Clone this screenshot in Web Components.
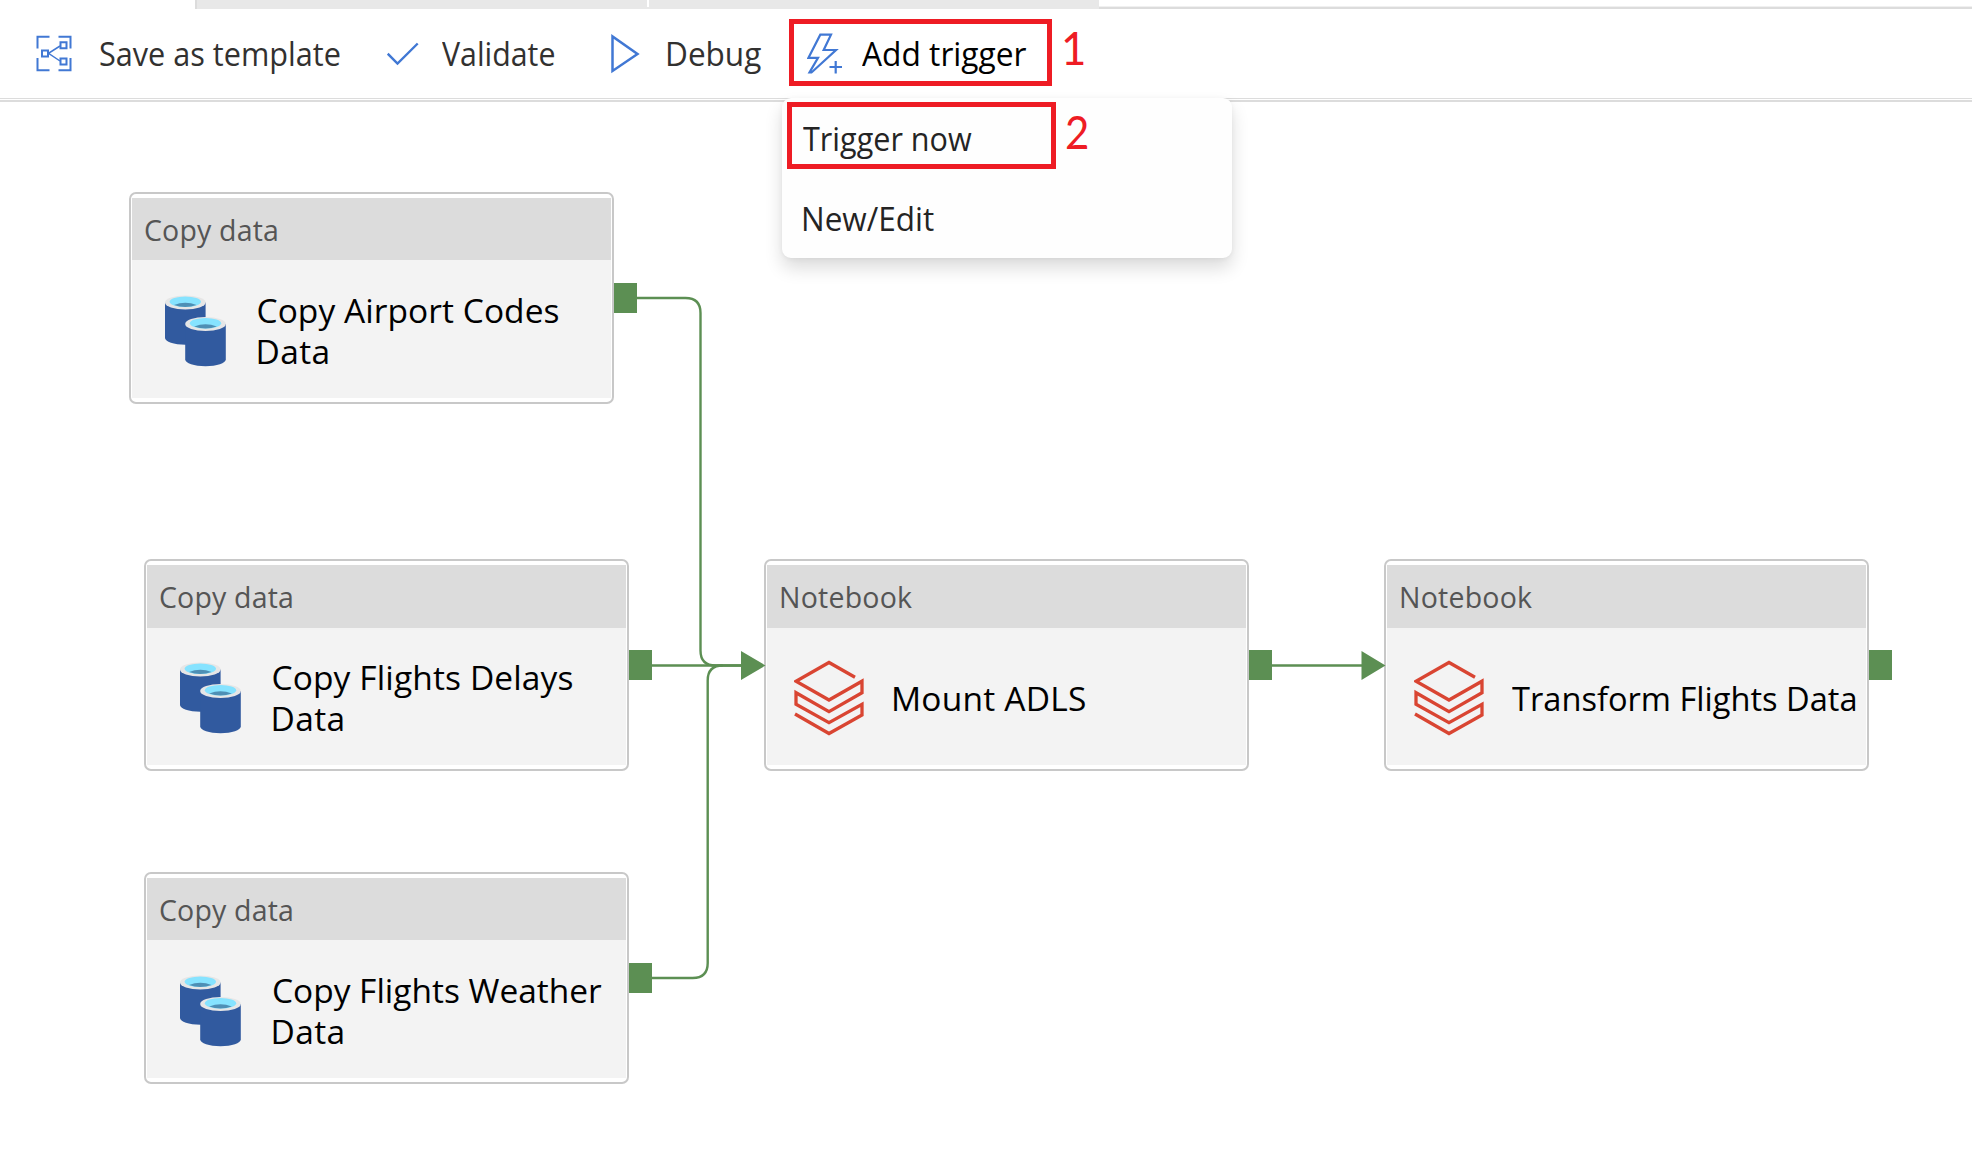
<!DOCTYPE html>
<html lang="en">
<head>
<meta charset="utf-8">
<title>Pipeline</title>
<style>
html,body{margin:0;height:100%;overflow:hidden;background:#fff}
body{font-family:"Open Sans","Noto Sans",sans-serif}
</style>
</head>
<body>
<pipeline-editor></pipeline-editor>
<script>
const define=(name,html,after)=>{
  const t=document.createElement('template');
  t.innerHTML=html;
  customElements.define(name,class extends HTMLElement{
    constructor(){super();this.attachShadow({mode:'open'}).append(t.content.cloneNode(true));}
    connectedCallback(){if(after)after.call(this,this.shadowRoot);}
  });
};

/* Text whose ink spans exactly "w" pixels: wide text is condensed, narrow text is tracked out. */
const pen=document.createElement('canvas').getContext('2d');
define('fit-text',`<style>:host{display:block;white-space:nowrap;flex:none}span{display:inline-block;transform-origin:0 50%}</style><span></span>`,function(r){
  const s=r.querySelector('span'),text=this.getAttribute('text'),w=+this.getAttribute('w');
  s.textContent=text;
  const cs=getComputedStyle(this);
  pen.font=cs.fontWeight+' '+cs.fontSize+' '+cs.fontFamily;
  const m=pen.measureText(text);
  const ink=m.actualBoundingBoxLeft+m.actualBoundingBoxRight;
  let k=1;
  if(ink>w){k=w/ink;s.style.transform='scaleX('+k.toFixed(4)+')';}
  else if(text.length>1)s.style.letterSpacing=((w-ink)/(text.length-1)).toFixed(3)+'px';
  s.style.marginLeft=(m.actualBoundingBoxLeft*k).toFixed(2)+'px';
  this.style.width=w+'px';
});

const icons={
  template:'<svg width="36" height="38" viewBox="36.5 34.5 36 38"><g fill="none" stroke="#4178d4" stroke-width="2"><path d="M50 36.3H38V48M59 36.3H71V48M38 57.500V69.700H50M71 57.500V69.700H59"/><path d="M42.500 50h6v6h-6zM61 41.800h6v6h-6zM61 58h6v6h-6z"/><path stroke-width="1.500" d="M60.500 45.500L49 52.800L60.500 60.500"/></g></svg>',
  check:'<svg width="32" height="24" viewBox="387 40 32 24"><path d="M387.700 51.700L397.500 61.500L417.700 41.500" fill="none" stroke="#4178d4" stroke-width="2.400"/></svg>',
  play:'<svg width="29" height="40" viewBox="611 33 29 40"><path d="M612.500 35.500V70L637.500 53Z" fill="none" stroke="#4178d4" stroke-width="2.500"/></svg>',
  bolt:'<svg width="36" height="42" viewBox="807 32.500 36 42"><g fill="none" stroke="#4178d4" stroke-width="2.200"><path d="M820.300 34.200H831L823.700 49.500H836L811.500 72H809.500L818 57.300H808.500Z"/><path d="M829.500 66.500H842M835.700 60.500V73"/></g></svg>',
  storage:'<svg width="62" height="72" viewBox="165 294.500 62 72"><g id="a"><path fill="#315a9f" d="M165 302V337.500C165 341.200 174 344.200 185.300 344.200S205.600 341.200 205.600 337.500V302Z"/><ellipse cx="185.300" cy="302" rx="20.300" ry="6.900" fill="#e6e6e6"/><ellipse cx="185.300" cy="301.200" rx="15.700" ry="5.300" fill="#86e3ff"/><path fill="#4e8fb5" d="M174 304.400Q185.300 300 196.600 304.400Q185.300 308.400 174 304.400Z"/></g><use href="#a" x="20.200" y="21.500"/></svg>',
  bricks:'<svg width="70" height="76" viewBox="794 660 70 76"><path fill="none" stroke="#d94532" stroke-width="3.300" d="M855 677.300L829 662.500L796 681.200L829 700L862 681.200V692.700L829 711.600L796 692.700V704.200L829 722.600L862 704.200V715L829 733.500L795 714"/></svg>'
};
define('app-icon','<style>:host{display:block;flex:none}svg{display:block}</style><div></div>',function(r){
  r.querySelector('div').innerHTML=icons[this.getAttribute('name')];
});

define('tab-strip',`<style>
:host{display:flex;height:9px}
.on{width:195px}
.tab{box-sizing:border-box;background:#e8e8e8}
.a{width:452px;border-left:2px solid #dcdcdc}
.sep{width:2px;background:#e8e8e8;display:flex}
.sep i{width:2px;height:7px;background:#fff}
.b{width:450px}
.rest{flex:1;box-sizing:border-box;border-bottom:2px solid #dcdcdc;box-shadow:inset 0 -1px #f0f0f0}
</style><div class="on"></div><div class="tab a"></div><div class="sep"><i></i></div><div class="tab b"></div><div class="rest"></div>`);

define('tool-button',`<style>
:host{display:flex;align-items:center;color:#323130;font-size:32px;line-height:44px}
</style><slot></slot>`);

define('tool-bar',`<style>
:host{display:flex;align-items:center;box-sizing:border-box;height:93px;padding:0 0 4px 36px;
 background:linear-gradient(#dcdcdc,#dcdcdc) 0 89px/100% 1px no-repeat,linear-gradient(#dcdcdc,#dcdcdc) 0 91px/100% 2px no-repeat}
tool-button fit-text{margin-top:1px}
tool-button.save{gap:28px;margin-right:46.500px}
tool-button.val{gap:23.500px;margin-right:56px}
tool-button.dbg{gap:28px;margin-right:28px}
tool-button.add{box-sizing:border-box;gap:19.500px;color:#000;width:263px;height:67px;border:5px solid #ee1c24;padding-left:13px;margin-top:-2px}
tool-button.add app-icon{margin-top:2px}
tool-button.add fit-text{margin-top:3px}
.n{font:400 46px Lato,sans-serif;color:#ee1c24;margin:-12px 0 0 12px}
</style>
<tool-button class="save"><app-icon name="template"></app-icon><fit-text text="Save as template" w="240"></fit-text></tool-button>
<tool-button class="val"><app-icon name="check"></app-icon><fit-text text="Validate" w="112.5"></fit-text></tool-button>
<tool-button class="dbg"><app-icon name="play"></app-icon><fit-text text="Debug" w="93"></fit-text></tool-button>
<tool-button class="add"><app-icon name="bolt"></app-icon><fit-text text="Add trigger" w="164.5"></fit-text></tool-button>
<fit-text class="n" text="1" w="20"></fit-text>`);

define('trigger-menu',`<style>
:host{position:absolute;left:782px;top:98px;width:450px;height:160px;display:flex;flex-direction:column;background:#fefefe;border-radius:9px;box-shadow:0 10px 18px rgba(0,0,0,.14),0 1px 5px rgba(0,0,0,.05);color:#242424;font-size:33px;line-height:44px}
.row{height:80px;display:flex;align-items:center}
.row.two{padding:2px 0 0 22px;box-sizing:border-box}
.hit{box-sizing:border-box;width:269px;height:67px;border:5px solid #ee1c24;margin:-5px 0 0 5px;padding-left:10.500px;display:flex;align-items:center}
.hit fit-text{margin-top:7px}
.n{font:400 46px Lato,sans-serif;color:#ee1c24;margin:-13px 0 0 11px}
</style>
<div class="row"><div class="hit"><fit-text text="Trigger now" w="169"></fit-text></div><fit-text class="n" text="2" w="21"></fit-text></div>
<div class="row two"><fit-text text="New/Edit" w="129.5"></fit-text></div>`);

define('activity-node',`<style>
:host{position:absolute;box-sizing:border-box;width:485px;height:212px;border:2px solid #c8c8c8;border-radius:7px;background:#fff;padding:4px 1px;display:flex;flex-direction:column}
.head{height:var(--head,62px);box-sizing:border-box;padding:var(--headpad,2px) 0 0 13px;background:#dcdcdc;color:#555;font-size:28.500px;display:flex;align-items:center}
:host([kind=bricks]) .head{padding-left:14px}
.body{flex:1;background:#f3f3f3;display:flex;align-items:center;color:#000;font-size:33.500px;line-height:41px}
app-icon{width:62px;margin-left:33px;margin-top:3px}
:host([kind=bricks]) app-icon{width:70px;margin-left:27px}
.lines{margin-left:31.500px;padding-top:var(--drop,4px)}
:host([kind=bricks]) .lines{margin-left:var(--text,30px)}
.port{position:absolute;left:483px;top:89px;width:23px;height:30px;background:#5c8f53}
</style><div class="head"></div><div class="body"></div><div class="port"></div>`,function(r){
  const a=n=>this.getAttribute(n);
  const [hx,hw]=a('head').split('|');
  r.querySelector('.head').innerHTML=`<fit-text text="${hx}" w="${hw}"></fit-text>`;
  r.querySelector('.body').innerHTML=`<app-icon name="${a('kind')}"></app-icon><div class="lines">`+a('lines').split(';').map(l=>{const [t,w]=l.split('|');return `<fit-text text="${t}" w="${w}"></fit-text>`;}).join('')+'</div>';
});

define('pipeline-canvas',`<style>
:host{display:block;flex:1}
.wires{position:absolute;left:0;top:0}
.n2,.n4,.n5{--head:63px;--headpad:0px}
.n1{left:129px;top:192px}.n2{left:144px;top:559px;--drop:2px}.n3{left:144px;top:872px}.n4{left:764px;top:559px}.n5{left:1384px;top:559px;--text:28px}
</style>
<activity-node class="n1" kind="storage" head="Copy data|132" lines="Copy Airport Codes|300;Data|69"></activity-node>
<activity-node class="n2" kind="storage" head="Copy data|132" lines="Copy Flights Delays|299;Data|69"></activity-node>
<activity-node class="n3" kind="storage" head="Copy data|132" lines="Copy Flights Weather|328;Data|69"></activity-node>
<activity-node class="n4" kind="bricks" head="Notebook|131" lines="Mount ADLS|191"></activity-node>
<activity-node class="n5" kind="bricks" head="Notebook|131" lines="Transform Flights Data|343"></activity-node>
<svg class="wires" width="1972" height="1161"><g fill="none" stroke="#5c8f53" stroke-width="2.400">
<path d="M637 298H685.500Q700.500 298 700.500 313V650.500Q700.500 665.500 715.500 665.500H742"/>
<path d="M652 665.500H742M1272 665.500H1363"/>
<path d="M652 978H692.700Q707.700 978 707.700 963V680.500Q707.700 665.500 722.700 665.500"/></g>
<path fill="#5c8f53" d="M741 651V680L765.500 665.500ZM1361.500 651V680L1385.500 665.500Z"/></svg>`);

define('pipeline-editor',`<style>
:host{position:relative;display:flex;flex-direction:column;width:1972px;height:1161px;overflow:hidden;background:#fff}
</style><tab-strip></tab-strip><tool-bar></tool-bar><pipeline-canvas></pipeline-canvas><trigger-menu></trigger-menu>`);
</script>
</body>
</html>
